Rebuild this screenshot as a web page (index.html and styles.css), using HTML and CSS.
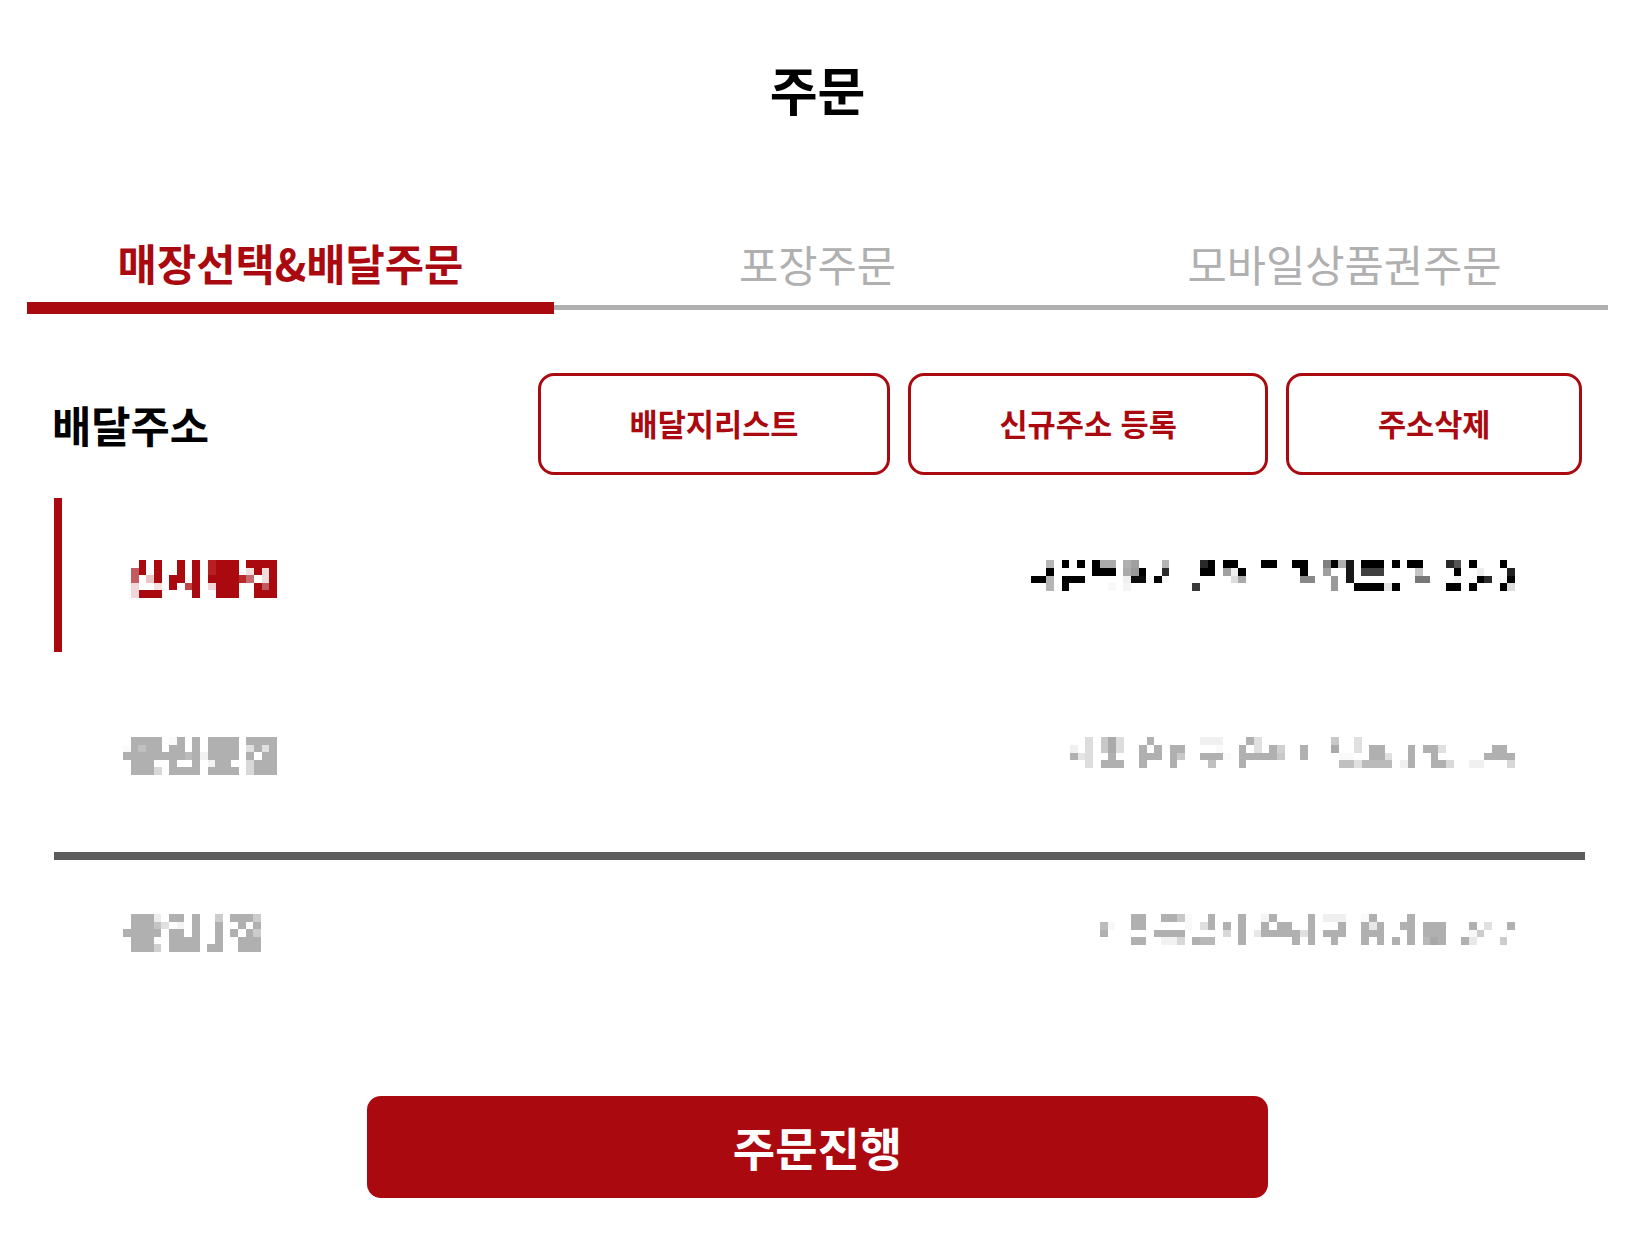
FILE: index.html
```html
<!DOCTYPE html>
<html lang="ko">

<head>
    <meta charset="UTF-8">
    <meta name="viewport" content="width=device-width, initial-scale=1.0">
    <title>주문</title>
    <link rel="stylesheet" href="styles.css">
</head>

<body>
    <div class="page">
        <h1 class="title">주문</h1>

        <div class="tabs">
            <div class="tab active">매장선택&amp;배달주문</div>
            <div class="tab">포장주문</div>
            <div class="tab">모바일상품권주문</div>
        </div>

        <div class="address-head">
            <h2 class="address-title">배달주소</h2>
            <div class="address-buttons">
                <button class="outline-button">배달지리스트</button>
                <button class="outline-button">신규주소 등록</button>
                <button class="outline-button">주소삭제</button>
            </div>
        </div>

        <div class="address-list">
            <!-- selected store, name and address are masked -->
            <div class="address-item selected">
                <svg class="mosaic mosaic-red" width="146" height="38" viewBox="0 0 19 5" preserveAspectRatio="none">
                    <g>
                        <rect x="1" width="1"/><rect x="3" width="1"/><rect x="6" width="1"/><rect x="8" width="1"/>
                        <rect x="10" width="1" fill="#b81f24"/><rect x="11" width="3"/><rect x="15" width="4"/>
                    </g>
                    <g transform="translate(0 1)">
                        <rect x="0" width="1" fill="#c05a60"/><rect x="1" width="1"/><rect x="3" width="1"/><rect x="6" width="1"/><rect x="8" width="1"/>
                        <rect x="10" width="1" fill="#b81f24"/><rect x="11" width="3"/><rect x="15" width="1" fill="#f5e0e0"/><rect x="16" width="1"/>
                        <rect x="17" width="1" fill="#f0dcdc"/><rect x="18" width="1"/>
                    </g>
                    <g transform="translate(0 2)">
                        <rect x="0" width="1" fill="#c45c60"/><rect x="2" width="1" fill="#eac4c6"/><rect x="3" width="1"/><rect x="5" width="2"/><rect x="8" width="1"/>
                        <rect x="10" width="4"/><rect x="14" width="1" fill="#b82a2a"/><rect x="15" width="1" fill="#c86a6c"/>
                        <rect x="17" width="1" fill="#f0dcdc"/><rect x="18" width="1"/>
                    </g>
                    <g transform="translate(0 3)">
                        <rect x="0" width="1" fill="#f0d8da"/><rect x="3" width="1" fill="#f5e0e0"/><rect x="5" width="1"/><rect x="7" width="1" fill="#c04448"/><rect x="8" width="1"/>
                        <rect x="10" width="1" fill="#f2d6d8"/><rect x="11" width="3"/><rect x="16" width="1"/><rect x="17" width="1" fill="#c05a60"/><rect x="18" width="1"/>
                    </g>
                    <g transform="translate(0 4)">
                        <rect x="0" width="1" fill="#f0d8da"/><rect x="1" width="3"/><rect x="8" width="1"/><rect x="11" width="3"/><rect x="16" width="3"/>
                    </g>
                </svg>
                <svg class="mosaic mosaic-black" width="484" height="31" viewBox="0 0 63 4" preserveAspectRatio="none">
                    <g>
                        <rect x="2" width="1" fill="#b5b5b5"/><rect x="4" width="1"/><rect x="6" width="1"/><rect x="8" width="1"/><rect x="9" width="2" fill="#aaa"/>
                        <rect x="12" width="1" fill="#b0b0b0"/><rect x="13" width="1" fill="#a0a0a0"/><rect x="17" width="1" fill="#b5b5b5"/><rect x="22" width="1" fill="#2a2a2a"/><rect x="23" width="1"/>
                        <rect x="25" width="2"/><rect x="30" width="2"/><rect x="34" width="2"/><rect x="38" width="1" fill="#7f7f7f"/><rect x="39" width="1"/><rect x="40" width="1" fill="#b0b0b0"/>
                        <rect x="41" width="1" fill="#181818"/><rect x="43" width="3"/><rect x="47" width="1"/><rect x="49" width="2"/><rect x="54" width="1" fill="#2a2a2a"/><rect x="55" width="1" fill="#555"/>
                        <rect x="57" width="1"/><rect x="61" width="1"/>
                    </g>
                    <g transform="translate(0 1)">
                        <rect x="2" width="1"/><rect x="8" width="3"/><rect x="12" width="1" fill="#aaa"/><rect x="13" width="1" fill="#999"/><rect x="14" width="1"/><rect x="17" width="1" fill="#2a2a2a"/>
                        <rect x="22" width="2"/><rect x="25" width="1" fill="#a0a0a0"/><rect x="26" width="1" fill="#eee"/><rect x="27" width="1"/><rect x="35" width="1"/><rect x="38" width="1" fill="#a0a0a0"/>
                        <rect x="41" width="1" fill="#181818"/><rect x="43" width="3" fill="#3f3f3f"/><rect x="50" width="1" fill="#c4c4c4"/><rect x="55" width="1"/><rect x="58" width="1" fill="#eee"/><rect x="62" width="1" fill="#222"/>
                    </g>
                    <g transform="translate(0 2)">
                        <rect x="0" width="2"/><rect x="2" width="1" fill="#b5b5b5"/><rect x="4" width="3"/><rect x="12" width="1" fill="#f0f0f0"/><rect x="13" width="2" fill="#0c0c0c"/><rect x="16" width="1"/>
                        <rect x="17" width="1" fill="#fafafa"/><rect x="26" width="1" fill="#ddd"/><rect x="27" width="1" fill="#aaa"/><rect x="35" width="2" fill="#888"/><rect x="39" width="1" fill="#999"/>
                        <rect x="41" width="1" fill="#181818"/><rect x="50" width="2" fill="#777"/><rect x="55" width="1" fill="#f5f5f5"/><rect x="58" width="1"/><rect x="59" width="1" fill="#2a2a2a"/><rect x="62" width="1"/>
                    </g>
                    <g transform="translate(0 3)">
                        <rect x="2" width="1" fill="#b5b5b5"/><rect x="4" width="1"/><rect x="10" width="1" fill="#f8f8f8"/><rect x="12" width="1" fill="#f4f4f4"/><rect x="21" width="1" fill="#3a3a3a"/>
                        <rect x="39" width="1" fill="#999"/><rect x="42" width="4"/><rect x="46" width="1" fill="#e4e4e4"/><rect x="47" width="1"/><rect x="54" width="2"/><rect x="57" width="1"/><rect x="61" width="1"/><rect x="62" width="1" fill="#ddd"/>
                    </g>
                </svg>
            </div>

            <div class="address-item">
                <svg class="mosaic mosaic-gray" width="154" height="38" viewBox="0 0 20 5" preserveAspectRatio="none">
                    <g>
                        <rect x="1" width="4"/><rect x="6" width="1" fill="#fafafa"/><rect x="7" width="1"/><rect x="9" width="1"/><rect x="11" width="4"/><rect x="16" width="4"/>
                    </g>
                    <g transform="translate(0 1)">
                        <rect x="0" width="1" fill="#fafafa"/><rect x="1" width="1"/><rect x="2" width="1" fill="#c0c0c0"/><rect x="3" width="2"/><rect x="6" width="2"/><rect x="9" width="1"/><rect x="11" width="4"/>
                        <rect x="16" width="1" fill="#e0e0e0"/><rect x="17" width="1"/><rect x="18" width="1" fill="#e0e0e0"/><rect x="19" width="1"/>
                    </g>
                    <g transform="translate(0 2)">
                        <rect x="0" width="8"/><rect x="8" width="1" fill="#bbb"/><rect x="9" width="1"/><rect x="10" width="1" fill="#f2f2f2"/><rect x="11" width="4"/><rect x="16" width="1"/><rect x="18" width="2"/>
                    </g>
                    <g transform="translate(0 3)">
                        <rect x="1" width="3"/><rect x="6" width="1"/><rect x="9" width="1"/><rect x="11" width="1" fill="#f2f2f2"/><rect x="12" width="2"/><rect x="16" width="1" fill="#d8d8d8"/><rect x="17" width="3"/>
                    </g>
                    <g transform="translate(0 4)">
                        <rect x="1" width="3"/><rect x="4" width="1" fill="#d8d8d8"/><rect x="6" width="4"/><rect x="11" width="4"/><rect x="16" width="1" fill="#d8d8d8"/><rect x="17" width="3"/>
                    </g>
                </svg>
                <svg class="mosaic mosaic-gray" width="445" height="31" viewBox="0 0 58 4" preserveAspectRatio="none">
                    <g>
                        <rect x="2" width="1" fill="#ddd"/><rect x="4" width="1" fill="#c8c8c8"/><rect x="5" width="1" fill="#aaa"/><rect x="6" width="1" fill="#ddd"/><rect x="10" width="1"/>
                        <rect x="17" width="3" fill="#f0f0f0"/><rect x="23" width="1"/><rect x="24" width="1" fill="#e0e0e0"/><rect x="34" width="1" fill="#c8c8c8"/><rect x="37" width="1" fill="#e0e0e0"/>
                    </g>
                    <g transform="translate(0 1)">
                        <rect x="0" width="1" fill="#f0f0f0"/><rect x="2" width="1" fill="#ddd"/><rect x="4" width="1" fill="#c8c8c8"/><rect x="5" width="1" fill="#aaa"/><rect x="6" width="1" fill="#ddd"/>
                        <rect x="9" width="1"/><rect x="11" width="1"/><rect x="13" width="2"/><rect x="19" width="1" fill="#fafafa"/><rect x="22" width="1"/><rect x="24" width="1" fill="#e0e0e0"/><rect x="26" width="1"/><rect x="27" width="1" fill="#d0d0d0"/>
                        <rect x="30" width="1"/><rect x="34" width="1" fill="#aaa"/><rect x="37" width="1" fill="#e0e0e0"/><rect x="39" width="2"/><rect x="44" width="1"/><rect x="46" width="2"/><rect x="48" width="1" fill="#e0e0e0"/><rect x="55" width="2"/>
                    </g>
                    <g transform="translate(0 2)">
                        <rect x="0" width="1"/><rect x="1" width="1" fill="#e4e4e4"/><rect x="2" width="1" fill="#ddd"/><rect x="5" width="1"/><rect x="9" width="3"/><rect x="13" width="1"/><rect x="14" width="1" fill="#c8c8c8"/>
                        <rect x="17" width="3"/><rect x="20" width="1" fill="#fafafa"/><rect x="22" width="5"/><rect x="27" width="1" fill="#c8c8c8"/><rect x="30" width="1"/><rect x="35" width="2" fill="#fafafa"/>
                        <rect x="39" width="2"/><rect x="41" width="1" fill="#e0e0e0"/><rect x="44" width="1"/><rect x="47" width="1"/><rect x="54" width="4"/>
                    </g>
                    <g transform="translate(0 3)">
                        <rect x="2" width="1" fill="#ddd"/><rect x="4" width="3"/><rect x="9" width="1"/><rect x="13" width="1"/><rect x="18" width="1" fill="#c0c0c0"/><rect x="22" width="1"/>
                        <rect x="35" width="2" fill="#c0c0c0"/><rect x="37" width="1" fill="#e0e0e0"/><rect x="38" width="4" fill="#bbb"/><rect x="43" width="1" fill="#f0f0f0"/><rect x="44" width="1"/>
                        <rect x="47" width="2"/><rect x="49" width="1" fill="#d8d8d8"/><rect x="52" width="2" fill="#f0f0f0"/><rect x="57" width="1" fill="#d8d8d8"/>
                    </g>
                </svg>
            </div>

            <div class="address-item divided">
                <svg class="mosaic mosaic-gray" width="138" height="38" viewBox="0 0 18 5" preserveAspectRatio="none">
                    <g>
                        <rect x="1" width="3"/><rect x="4" width="1" fill="#ececec"/><rect x="6" width="2"/><rect x="9" width="1"/><rect x="12" width="1" fill="#ccc"/><rect x="14" width="3"/><rect x="17" width="1" fill="#ccc"/>
                    </g>
                    <g transform="translate(0 1)">
                        <rect x="1" width="3"/><rect x="4" width="1" fill="#c4c4c4"/><rect x="5" width="1" fill="#e0e0e0"/><rect x="7" width="1" fill="#f4f4f4"/><rect x="9" width="1"/><rect x="12" width="1"/><rect x="15" width="1"/><rect x="17" width="1"/>
                    </g>
                    <g transform="translate(0 2)">
                        <rect x="0" width="5"/><rect x="6" width="2"/><rect x="9" width="1"/><rect x="12" width="1"/><rect x="14" width="1"/><rect x="16" width="1"/><rect x="17" width="1" fill="#ccc"/>
                    </g>
                    <g transform="translate(0 3)">
                        <rect x="1" width="3"/><rect x="6" width="4"/><rect x="12" width="1"/><rect x="15" width="3"/>
                    </g>
                    <g transform="translate(0 4)">
                        <rect x="1" width="3"/><rect x="4" width="1" fill="#d0d0d0"/><rect x="6" width="4"/><rect x="11" width="2"/><rect x="15" width="3"/>
                    </g>
                </svg>
                <svg class="mosaic mosaic-gray" width="415" height="31" viewBox="0 0 54 4" preserveAspectRatio="none">
                    <g>
                        <rect x="4" width="2"/><rect x="8" width="2"/><rect x="10" width="1" fill="#c8c8c8"/><rect x="11" width="1" fill="#fafafa"/><rect x="14" width="1"/><rect x="18" width="1"/><rect x="21" width="1" fill="#f4f4f4"/><rect x="22" width="1"/>
                        <rect x="27" width="1"/><rect x="29" width="3" fill="#f0f0f0"/><rect x="34" width="1" fill="#fafafa"/><rect x="35" width="1"/><rect x="40" width="1"/>
                    </g>
                    <g transform="translate(0 1)">
                        <rect x="0" width="1" fill="#bbb"/><rect x="1" width="1" fill="#f8f8f8"/><rect x="4" width="2"/><rect x="11" width="1" fill="#f8f8f8"/><rect x="13" width="1" fill="#e0e0e0"/><rect x="14" width="1"/><rect x="16" width="1"/><rect x="18" width="1"/>
                        <rect x="21" width="1"/><rect x="23" width="2"/><rect x="27" width="1"/><rect x="31" width="1"/><rect x="34" width="1"/><rect x="35" width="1" fill="#e8e8e8"/><rect x="36" width="1"/><rect x="39" width="2"/><rect x="42" width="3"/>
                        <rect x="48" width="1"/><rect x="50" width="1" fill="#e0e0e0"/><rect x="53" width="1"/>
                    </g>
                    <g transform="translate(0 2)">
                        <rect x="0" width="1"/><rect x="7" width="4"/><rect x="16" width="1" fill="#d8d8d8"/><rect x="18" width="1"/><rect x="20" width="1" fill="#e8e8e8"/><rect x="21" width="4"/><rect x="25" width="1"/><rect x="26" width="1" fill="#e0e0e0"/>
                        <rect x="27" width="1"/><rect x="29" width="3"/><rect x="34" width="3"/><rect x="40" width="1"/><rect x="42" width="3"/><rect x="48" width="1" fill="#f8f8f8"/><rect x="49" width="1" fill="#ccc"/>
                    </g>
                    <g transform="translate(0 3)">
                        <rect x="4" width="2"/><rect x="8" width="2" fill="#f2f2f2"/><rect x="10" width="1" fill="#d8d8d8"/><rect x="12" width="1"/><rect x="13" width="2" fill="#b8b8b8"/><rect x="18" width="1"/><rect x="25" width="1"/><rect x="27" width="1"/>
                        <rect x="30" width="1"/><rect x="34" width="1"/><rect x="36" width="1"/><rect x="38" width="1"/><rect x="40" width="1"/><rect x="42" width="1" fill="#b8b8b8"/><rect x="43" width="1" fill="#a8a8a8"/><rect x="44" width="1"/>
                        <rect x="47" width="1"/><rect x="48" width="1" fill="#e8e8e8"/><rect x="52" width="1" fill="#ccc"/>
                    </g>
                </svg>
            </div>
        </div>

        <div class="order-row">
            <button class="order-button">주문진행</button>
        </div>
    </div>
</body>

</html>
```

FILE: styles.css
```css
* {
    box-sizing: border-box;
}

body {
    margin: 0;
    background-color: #fff;
    font-family: "Noto Sans CJK KR", "Noto Sans", sans-serif;
}

.page {
    width: 1581px;
    margin-left: 27px;
}

.title {
    margin: 0;
    padding-top: 53px;
    height: 232px;
    font-size: 52px;
    line-height: 72px;
    font-weight: 700;
    text-align: center;
    color: #000;
}

.tabs {
    display: flex;
    align-items: flex-end;
}

.tab {
    flex: 1;
    height: 77px;
    margin-bottom: 4px;
    border-bottom: 5px solid #b0b0b0;
    font-size: 42.7px;
    line-height: 60px;
    text-align: center;
    color: #b0b0b0;
}

.tab.active {
    height: 82px;
    margin-bottom: 0;
    border-bottom: 12px solid #ab0910;
    font-weight: 700;
    color: #ab0910;
}

.address-head {
    display: flex;
    justify-content: space-between;
    align-items: center;
    margin-top: 59px;
    padding: 0 26px 0 25px;
}

.address-title {
    margin: 0;
    font-size: 42.7px;
    font-weight: 700;
    color: #000;
}

.address-buttons {
    display: flex;
    gap: 18px;
}

.outline-button {
    height: 102px;
    padding: 0 88.5px 2px;
    border: 3px solid #ab0910;
    border-radius: 16px;
    background: #fff;
    font-family: inherit;
    font-size: 30.6px;
    font-weight: 700;
    color: #ab0910;
}

.address-list {
    display: flex;
    flex-direction: column;
    gap: 23px;
    margin: 23px 23px 0 27px;
}

.address-item {
    display: flex;
    justify-content: space-between;
    align-items: flex-start;
    height: 154px;
    padding: 62px 70px 0 69px;
}

.address-item.selected {
    border-left: 8px solid #ab0910;
}

.address-item.divided {
    border-top: 8px solid #5c5c5c;
    padding-top: 54px;
}

.mosaic {
    display: block;
    shape-rendering: crispEdges;
}

.mosaic rect {
    height: 1px;
}

.mosaic-red {
    fill: #ab0910;
}

.mosaic-black {
    fill: #000;
}

.mosaic-gray {
    fill: #b0b0b0;
}

.order-row {
    display: flex;
    justify-content: center;
    margin-top: 90px;
}

.order-button {
    width: 901px;
    height: 102px;
    padding-bottom: 4px;
    border: none;
    border-radius: 14px;
    background-color: #ab0910;
    font-family: inherit;
    font-size: 46px;
    font-weight: 700;
    color: #fff;
}
```
